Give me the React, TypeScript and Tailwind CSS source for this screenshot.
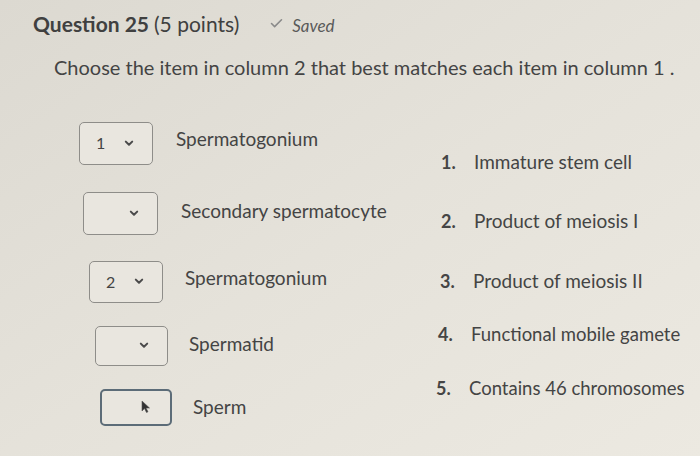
import { Check } from "lucide-react";

type Row = { value: string; label: string; box: string; text: string; mt: string; focus?: boolean };

const rows: Row[] = [
  { value: "1", label: "Spermatogonium", box: "ml-[79px] w-[74px] h-[43px]", text: "ml-[23px] -mt-[8px]", mt: "mt-[0px]" },
  { value: "", label: "Secondary spermatocyte", box: "ml-[83px] w-[75px] h-[43px]", text: "ml-[23px] -mt-[4px]", mt: "mt-[27px]" },
  { value: "2", label: "Spermatogonium", box: "ml-[89px] w-[74px] h-[42px]", text: "ml-[22px] -mt-[6px]", mt: "mt-[26px]" },
  { value: "", label: "Spermatid", box: "ml-[95px] w-[73px] h-[40px]", text: "ml-[21px] -mt-[2px]", mt: "mt-[23px]" },
  { value: "", label: "Sperm", box: "ml-[100px] w-[72px] h-[37px]", text: "ml-[21px] mt-0", mt: "mt-[23px]", focus: true },
];

const answers = [
  { n: "1.", t: "Immature stem cell", ml: "ml-[441px]", mt: "mt-0", size: "text-[19px]" },
  { n: "2.", t: "Product of meiosis I", ml: "ml-[441px]", mt: "mt-[31px]", size: "text-[19px]" },
  { n: "3.", t: "Product of meiosis II", ml: "ml-[440px]", mt: "mt-[31px]", size: "text-[19px]" },
  { n: "4.", t: "Functional mobile gamete", ml: "ml-[438px]", mt: "mt-[26px]", size: "text-[18.5px]" },
  { n: "5.", t: "Contains 46 chromosomes", ml: "ml-[436px]", mt: "mt-[26px]", size: "text-[18.5px]" },
];

function Chevron() {
  return (
    <svg width="10" height="7" viewBox="0 0 10 7" className="text-[#4a4a4a]">
      <path d="M1.8 1.6 L5 4.8 L8.2 1.6" fill="none" stroke="currentColor" strokeWidth="2" strokeLinecap="round" strokeLinejoin="round" />
    </svg>
  );
}

function Cursor() {
  return (
    <svg width="12" height="14" viewBox="0 0 12 14">
      <path d="M2 1 L2 11 L4.5 8.5 L6.5 12.5 L8 11.8 L6 8 L9.5 8 Z" fill="#333" stroke="#555" strokeWidth="0.6" />
    </svg>
  );
}

export default function App() {
  return (
    <div
      className="relative h-[456px] w-[700px] overflow-hidden bg-gradient-to-br from-[#dcd9d1] via-[#e5e2da] to-[#ece9e1] text-[#3b3b3b]"
      style={{ fontFamily: "Lato, 'Noto Sans', sans-serif" }}
    >
      {/* Заголовок */}
      <div className="flex items-baseline pl-[33px] pt-[8px]">
        <span className="text-[21px] font-bold text-[#404040]">Question 25</span>
        <span className="ml-[5px] text-[21px] text-[#404040]">(5 points)</span>
        <Check className="ml-[30px] h-[15px] w-[15px] self-center text-[#8a8a8a]" strokeWidth={2.5} />
        <span className="ml-[8px] text-[17px] italic text-[#5a5a5a]">Saved</span>
      </div>

      <div className="mt-[12px] pl-[54px] text-[20px] text-[#444]">
        Choose the item in column 2 that best matches each item in column 1 .
      </div>

      <div className="relative mt-[40px] flex">
        {/* Колонка 1 */}
        <div className="flex flex-col">
          {rows.map((r, i) => (
            <div key={i} className={`flex items-center ${r.mt}`}>
              <div
                className={`flex shrink-0 items-center justify-between rounded-[5px] bg-[#e9e6df] pl-[16px] pr-[18px] ${r.box} ${
                  r.focus ? "border-2 border-[#5c6c78]" : "border border-[#8e8d89]"
                }`}
              >
                <span className="text-[16px] text-[#444]">{r.value}</span>
                {r.focus ? <Cursor /> : <Chevron />}
              </div>
              <span className={`text-[19px] text-[#444] ${r.text}`}>{r.label}</span>
            </div>
          ))}
        </div>

        {/* Колонка 2 */}
        <div className="absolute left-0 top-[26px] flex flex-col">
          {answers.map((a, i) => (
            <div key={i} className={`flex items-baseline ${a.ml} ${a.mt}`}>
              <span className="w-[33px] text-[18px] font-bold text-[#454545]">{a.n}</span>
              <span className={`${a.size} text-[#444]`}>{a.t}</span>
            </div>
          ))}
        </div>
      </div>
    </div>
  );
}
